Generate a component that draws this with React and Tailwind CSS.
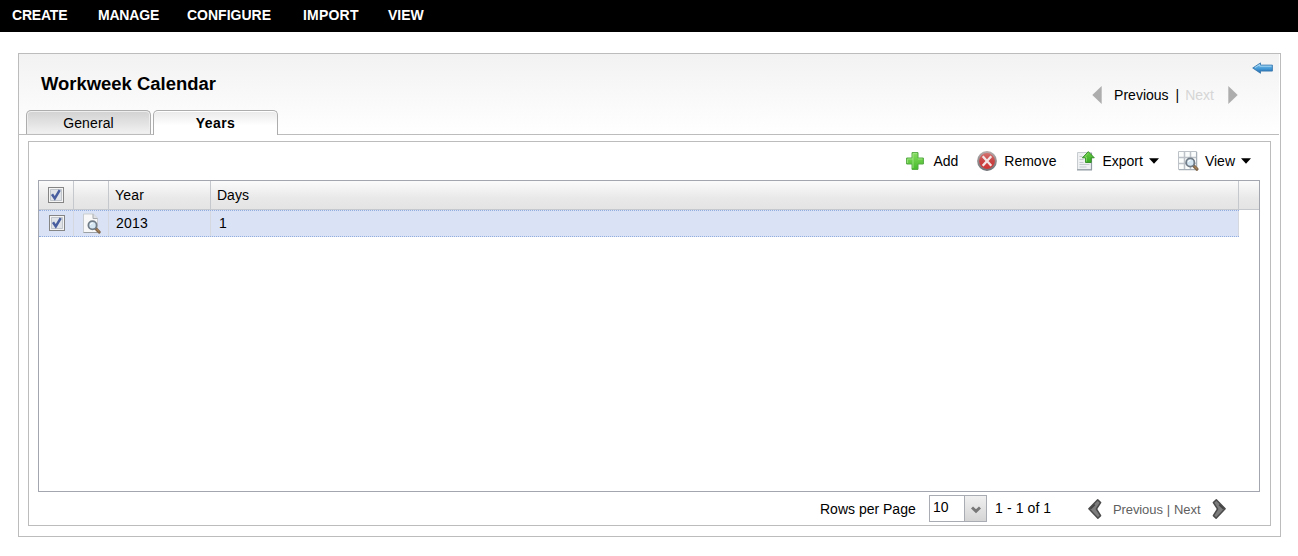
import React from 'react';

const NAV = [
  ['CREATE', 'w-[86px] tracking-[-0.2px]'],
  ['MANAGE', 'w-[89px] tracking-[-0.2px]'],
  ['CONFIGURE', 'w-[116px]'],
  ['IMPORT', 'w-[85px] tracking-[0.2px]'],
  ['VIEW', 'w-[60px]'],
];

function BackArrow() {
  return (
    <svg width="21" height="12" viewBox="0 0 21 12">
      <defs>
        <linearGradient id="ba" x1="0" x2="0" y1="0" y2="1">
          <stop offset="0" stopColor="#8dc8ee" />
          <stop offset="0.5" stopColor="#4a9fda" />
          <stop offset="1" stopColor="#1f66ab" />
        </linearGradient>
      </defs>
      <path d="M.7 6 8.5 .9 V3.1 H20.4 V9.1 H8.5 V11.3Z" fill="url(#ba)" stroke="#2f70a8" strokeWidth=".8" />
      <path d="M3 5.6 7.7 2.7V4.2H19.5" fill="none" stroke="#b4ddf5" strokeWidth=".8" />
    </svg>
  );
}

function AddIcon() {
  return (
    <svg width="18" height="18" viewBox="0 0 18 18">
      <defs>
        <linearGradient id="ad" x1="0" x2="0" y1="0" y2="1">
          <stop offset="0" stopColor="#86dc60" />
          <stop offset="1" stopColor="#45bb2a" />
        </linearGradient>
      </defs>
      <path d="M6 .6h6v5.4h5.4v6H12v5.4H6V12H.6V6H6z" fill="url(#ad)" stroke="#54a843" strokeLinejoin="round" />
      <path d="M7 16V1.6h4M1.6 11V7H7M12 7h4.4" fill="none" stroke="#a5e88a" strokeWidth=".8" />
    </svg>
  );
}

function RemoveIcon() {
  return (
    <svg width="20" height="20" viewBox="0 0 20 20">
      <defs>
        <linearGradient id="rm" x1="0" x2="0" y1="0" y2="1">
          <stop offset="0" stopColor="#d57775" />
          <stop offset="0.5" stopColor="#c84444" />
          <stop offset="1" stopColor="#d33434" />
        </linearGradient>
        <linearGradient id="rr" x1="0" x2="0" y1="0" y2="1">
          <stop offset="0" stopColor="#b5a9a9" />
          <stop offset="1" stopColor="#707377" />
        </linearGradient>
      </defs>
      <circle cx="10" cy="10" r="8.9" fill="url(#rm)" stroke="url(#rr)" strokeWidth="2" />
      <path d="M5.7 5.2 14.3 14.8M14.3 5.2 5.7 14.8" stroke="#f3e6e6" strokeWidth="2.3" />
    </svg>
  );
}

function ExportIcon() {
  return (
    <svg width="19" height="20" viewBox="0 0 19 20">
      <defs>
        <linearGradient id="ex" x1="0" x2="0" y1="0" y2="1">
          <stop offset="0" stopColor="#6cd04a" />
          <stop offset="1" stopColor="#35a921" />
        </linearGradient>
      </defs>
      <path d="M1.5 1.5h14v17h-14z" fill="#eef0f2" stroke="#c7ccd0" />
      <path d="M15.5 2v17M1 18.9h15" fill="none" stroke="#929ba3" strokeWidth="1.2" />
      <path d="M3.5 5.5h3M3.5 8.5h4M3.5 11.5h4M3.5 13.5h10M3.5 16h7" stroke="#c5cacf" />
      <path d="M12.3 .6 18.3 6.8H15.2V11.5H9.5V6.8H6.4Z" fill="url(#ex)" stroke="#318a24" strokeWidth=".9" />
      <path d="M12.2 2.1 8.8 6H10.4v4.6" fill="none" stroke="#95df74" strokeWidth=".7" />
    </svg>
  );
}

function Lens({ cx, cy }) {
  return (
    <g transform={`translate(${cx} ${cy})`}>
      <path d="M3.2 3.2 6.6 6.7" stroke="#80664a" strokeWidth="3.2" strokeLinecap="round" />
      <path d="M4.2 3.8 6.8 6.4" stroke="#ad875b" strokeWidth="1.1" />
      <circle r="4.1" fill="#d6e7f4" stroke="#6f7b86" strokeWidth="1.8" />
      <path d="M-2.2-.5A2.3 2.3 0 0 1 .2-2.2" fill="none" stroke="#fff" />
    </g>
  );
}

function ViewIcon() {
  return (
    <svg width="21" height="20" viewBox="0 0 21 20">
      <path d="M.5.5h18v18H.5z" fill="#fbfcfc" stroke="#bcc2c8" />
      <path d="M1 6.5h18M1 12.5h18M6.5 1v18M12.5 1v18" stroke="#bcc2c8" strokeWidth="1.5" />
      <path d="M18.6 1v18M1 18.6h18" stroke="#a6afb7" strokeWidth="1.3" />
      <Lens cx={12.3} cy={11.5} />
    </svg>
  );
}

function PageIcon() {
  return (
    <svg width="19" height="21" viewBox="0 0 19 21">
      <path d="M.5 1h9.8l4.2 4.2v14.3H.5z" fill="#f8f8f8" stroke="#c9cccf" />
      <path d="M10 1v4.5h4.5" fill="#dfe1e3" stroke="#a7abb0" />
      <path d="M.5 19.5h14" stroke="#9ba0a5" />
      <Lens cx={9.5} cy={12.3} />
    </svg>
  );
}

function Check() {
  return (
    <span className="flex h-4 w-4 shrink-0 border border-[#858585] bg-[#f4f4f4] p-px">
      <svg className="bg-[#e0e3e8]" width="12" height="12" viewBox="0 0 12 12">
        <path d="M.5 11.5V.5H11.5V11.5Z" fill="none" stroke="#c0c4cb" />
        <path d="M2 5.2 4.8 9.4 9.7 1.2" fill="none" stroke="#485e9f" strokeWidth="2.5" />
      </svg>
    </span>
  );
}

function Caret() {
  return (
    <svg width="10" height="6" viewBox="0 0 10 6">
      <path d="M0 .3H10L5 5.8Z" />
    </svg>
  );
}

function Triangle({ right }) {
  return (
    <svg width="10" height="18" viewBox="0 0 10 18">
      <path d={right ? 'M.3 0 9.7 9 .3 18Z' : 'M9.7 0 .3 9 9.7 18Z'} fill="#adadad" />
    </svg>
  );
}

function Chevron({ right }) {
  return (
    <svg width="14" height="20" viewBox="0 0 14 20">
      <g transform={right ? 'translate(14 0) scale(-1 1)' : undefined} strokeLinejoin="round">
        <path d="M.9 9.8 9.7 .8 12.6 3.6 8.4 10 12.6 16.6 9.9 19.2Z" fill="#7d7d7d" stroke="#4a4a4a" strokeWidth="1.5" />
        <path d="M2.4 9.9 6.8 5.7" stroke="#444" strokeWidth="1.6" />
      </g>
    </svg>
  );
}

const HEAD = 'flex shrink-0 items-center border-r border-[#c5c8cc]';
const CELL = 'flex shrink-0 items-center border-r border-[#d5d8de]';

export default function App() {
  return (
    <div className="h-[556px] w-[1298px] overflow-hidden bg-white font-['Liberation_Sans',Arial,sans-serif] text-[14px] leading-4 text-black">
      <nav className="flex h-8 bg-black pl-[12px] pt-[7px] font-bold text-white">
        {NAV.map(([t, w]) => (
          <span key={t} className={w}>{t}</span>
        ))}
      </nav>

      <main className="ml-[18px] mt-[21px] flex h-[484px] w-[1263px] flex-col border border-[#bcbcbc]">
        <header className="mr-px flex h-[81px] shrink-0 justify-between border-b border-[#bcbcbc] bg-linear-to-b from-[#f2f2f2] to-white">
          <div className="flex flex-col">
            <h1 className="h-[56px] shrink-0 pl-[22px] pt-[20px] text-[18.45px] font-bold leading-5">Workweek Calendar</h1>
            <div className="ml-[7px] flex h-[25px] shrink-0 gap-[2px]">
              <div className="h-6 w-[125px] rounded-t-[5px] border border-b-0 border-[#adadad] bg-linear-to-b from-[#d2d2d2] to-[#f2f2f2] pt-[4px] text-center tracking-[0.1px] shadow-[inset_0_0_0_1px_#eeeeee]">General</div>
              <div className="h-[25px] w-[125px] rounded-t-[5px] border border-b-0 border-[#adadad] bg-linear-to-b from-[#e9e9e9] to-white to-60% pt-[4px] text-center font-bold tracking-[0.45px] shadow-[inset_0_1px_0_0_#ffffff]">Years</div>
            </div>
          </div>
          <div className="flex pt-[8px]">
            <div className="flex h-[18px] pt-[25px]">
              <span className="-mt-px"><Triangle /></span>
              <span className="ml-[12px]">Previous</span>
              <span className="ml-[7px]">|</span>
              <span className="ml-[6px] text-[#d6d6d6]">Next</span>
              <span className="-mt-px ml-[14px]"><Triangle right /></span>
            </div>
            <span className="ml-[14px] mr-[6px]"><BackArrow /></span>
          </div>
        </header>

        <section className="ml-[9px] mt-[6px] flex h-[385px] w-[1243px] flex-col border border-[#bcbcbc] pl-[9px]">
          <div className="flex h-[38px] items-center justify-end pr-[19px]">
            <AddIcon />
            <span className="ml-[9px]">Add</span>
            <span className="ml-[19px]"><RemoveIcon /></span>
            <span className="ml-[7px]">Remove</span>
            <span className="ml-[20px]"><ExportIcon /></span>
            <span className="ml-[7px] mr-[6px]">Export</span>
            <Caret />
            <span className="ml-[19px]"><ViewIcon /></span>
            <span className="ml-[6px] mr-[6px]">View</span>
            <Caret />
          </div>

          <div className="h-[312px] w-[1222px] shrink-0 border border-[#a3a6ae]">
            <div className="flex h-[29px] border-b border-[#c5c8cc] bg-linear-to-b from-[#fbfbfb] via-[#e9e9e9] via-60% to-[#e4e4e4]">
              <div className={`${HEAD} w-[35px] pl-[9px]`}><Check /></div>
              <div className={`${HEAD} w-[35px]`} />
              <div className={`${HEAD} w-[102px] pl-[6px] tracking-[0.2px]`}>Year</div>
              <div className={`${HEAD} w-[1028px] pl-[6px]`}>Days</div>
            </div>
            <div className="flex h-[27px] w-[1200px] border-y border-dotted border-[#92aee0] bg-[#d9e3f5]">
              <div className={`${CELL} w-[35px] pb-[2px] pl-[10px]`}><Check /></div>
              <div className={`${CELL} w-[35px] pl-[9px]`}><PageIcon /></div>
              <div className={`${CELL} w-[102px] pb-[2px] pl-[7px] tracking-[0.2px]`}>2013</div>
              <div className={`${CELL} w-[1028px] pb-[2px] pl-[8px]`}>1</div>
            </div>
          </div>

          <footer className="flex h-[33px] pl-[782px]">
            <span className="w-[109px] shrink-0 pt-[9px]">Rows per Page</span>
            <div className="mt-[3px] flex h-[27px] w-[58px] shrink-0 border border-[#a9acb3]">
              <span className="w-[35px] border-r border-[#a9acb3] pl-[3px] pt-[3px]">10</span>
              <span className="flex flex-1 items-center justify-center bg-linear-to-b from-[#f0f0f0] to-[#d5d5d5] pt-[2px]">
                <svg width="10" height="8" viewBox="0 0 10 8"><path d="M1 1.5 5 5.3 9 1.5" fill="none" stroke="#777" strokeWidth="3" /></svg>
              </span>
            </div>
            <span className="w-[101px] shrink-0 pl-[8px] pt-[8px] tracking-[0.1px]">1 - 1 of 1</span>
            <span className="mt-[7px] shrink-0"><Chevron /></span>
            <span className="ml-[11px] flex w-[99px] shrink-0 gap-[4px] pt-[10px] text-[13px] tracking-[-0.1px] text-[#5f5f5f]"><span>Previous</span><span>|</span><span>Next</span></span>
            <span className="mt-[7px] shrink-0"><Chevron right /></span>
          </footer>
        </section>
      </main>
    </div>
  );
}
